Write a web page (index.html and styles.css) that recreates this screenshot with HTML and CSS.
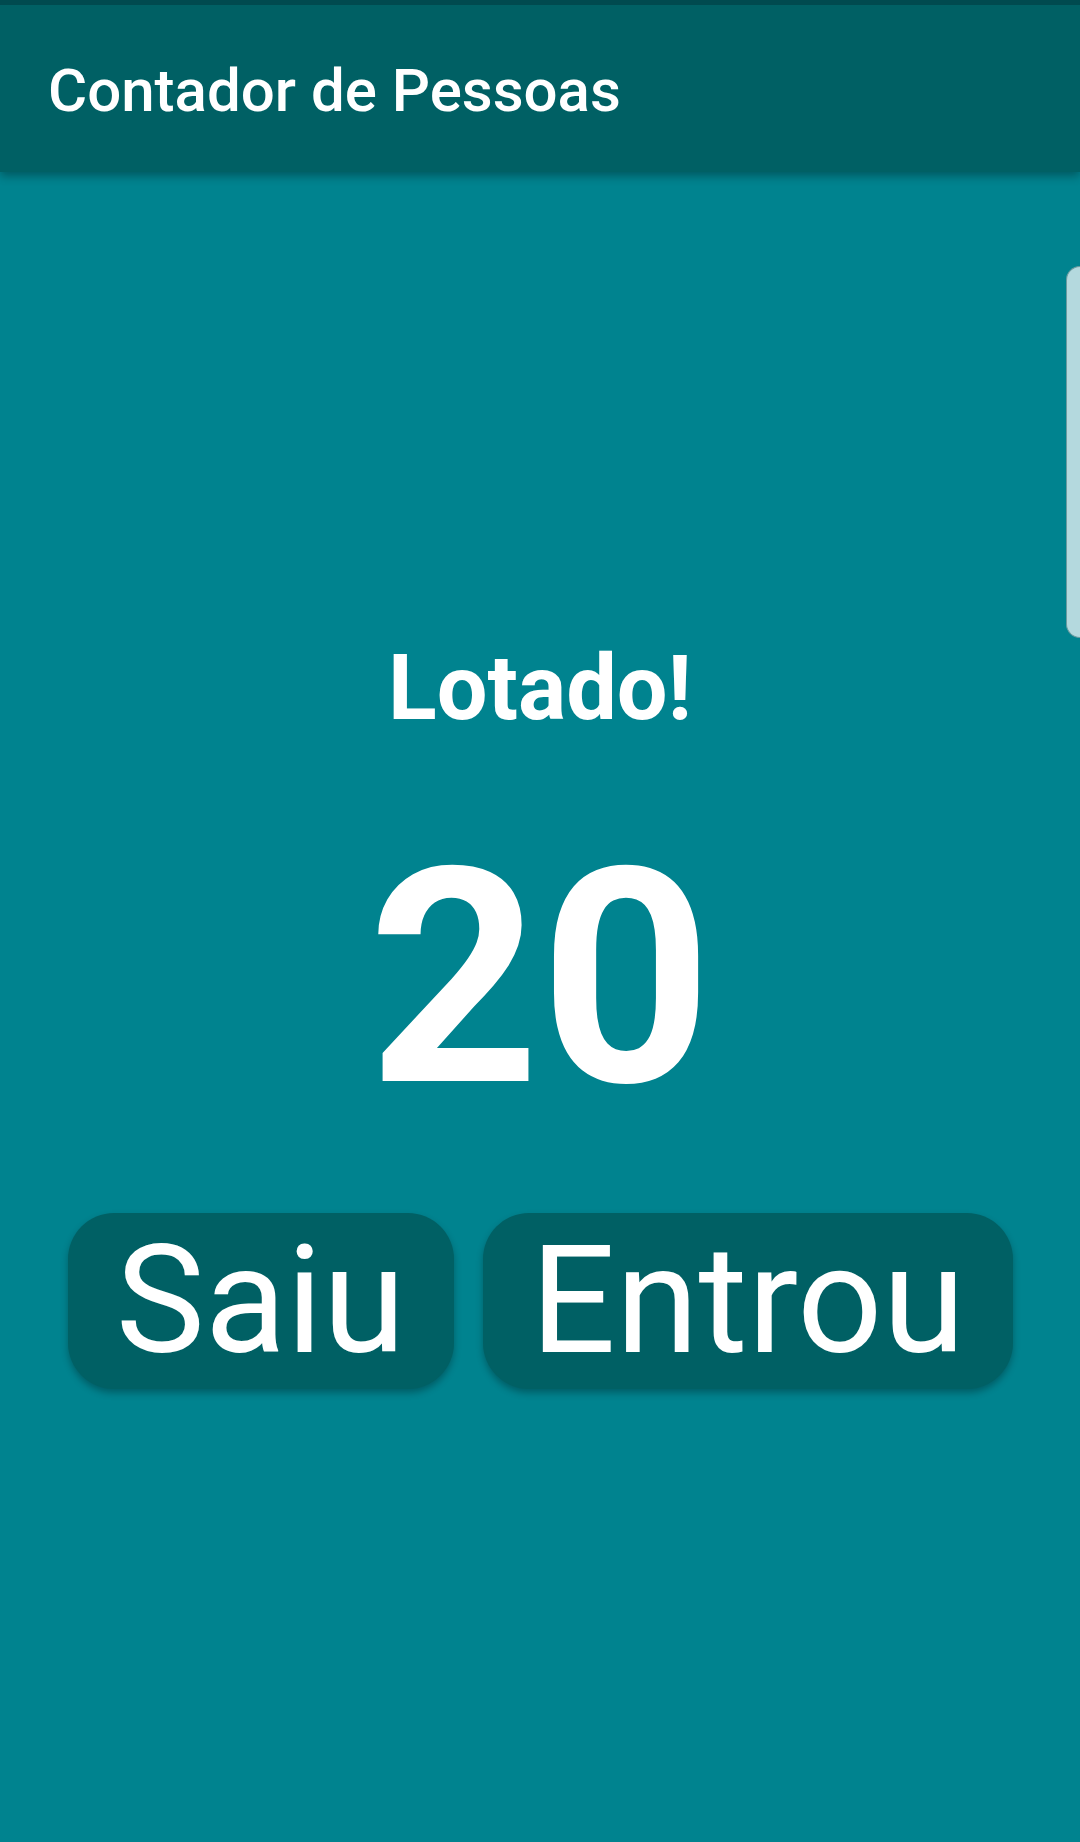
FILE: index.html
```html
<!DOCTYPE html>
<html lang="pt">
<head>
<meta charset="utf-8">
<title>Contador de Pessoas</title>
<link rel="stylesheet" href="styles.css">
</head>
<body>
<div class="screen">
  <header class="appbar">
    <h1 class="title">Contador de Pessoas</h1>
  </header>
  <main class="content">
    <p class="status">Lotado!</p>
    <p class="count">20</p>
    <div class="actions">
      <button class="btn">Saiu</button>
      <button class="btn">Entrou</button>
    </div>
  </main>
  <div class="edge-handle"></div>
</div>
</body>
</html>
```
FILE: styles.css
```css
html, body {
  margin: 0;
  padding: 0;
}
body {
  width: 1080px;
  height: 1842px;
  background: #00838f;
  font-family: Roboto, "Noto Sans", sans-serif;
  overflow: hidden;
}
.screen {
  position: relative;
  width: 1080px;
  height: 1842px;
  display: flex;
  flex-direction: column;
}
.appbar {
  position: relative;
  z-index: 2;
  height: 163px;
  border-top: 5px solid #004a4f;
  background: #006064;
  display: flex;
  align-items: center;
  padding-left: 48px;
  padding-top: 4px;
  box-shadow: 0 4px 9px rgba(0, 0, 0, 0.32);
}
.title {
  margin: 0;
  color: #ffffff;
  font-size: 60px;
  font-weight: 500;
}
.content {
  flex: 1;
  display: flex;
  flex-direction: column;
  align-items: center;
  padding-top: 472px;
}
.status {
  margin: 0;
  color: #ffffff;
  font-size: 90px;
  font-weight: 700;
  line-height: 1;
}
.count {
  margin: 95px 0 0;
  color: #ffffff;
  font-size: 300px;
  font-weight: 700;
  line-height: 1;
}
.actions {
  margin-top: 84px;
  display: flex;
  gap: 29px;
  padding-left: 1px;
}
.btn {
  height: 176px;
  padding: 0 48px;
  border: none;
  border-radius: 46px;
  background: #006064;
  color: #ffffff;
  font-family: Roboto, "Noto Sans", sans-serif;
  font-size: 150px;
  font-weight: 400;
  line-height: 1;
  box-shadow: 0 4px 7px rgba(0, 0, 0, 0.28);
}
.edge-handle {
  position: absolute;
  top: 266px;
  right: 0;
  width: 13px;
  height: 370px;
  background: #b4d9de;
  border: 1px solid #6b9ba0;
  border-right: none;
  border-radius: 16px 0 0 16px;
}
```
